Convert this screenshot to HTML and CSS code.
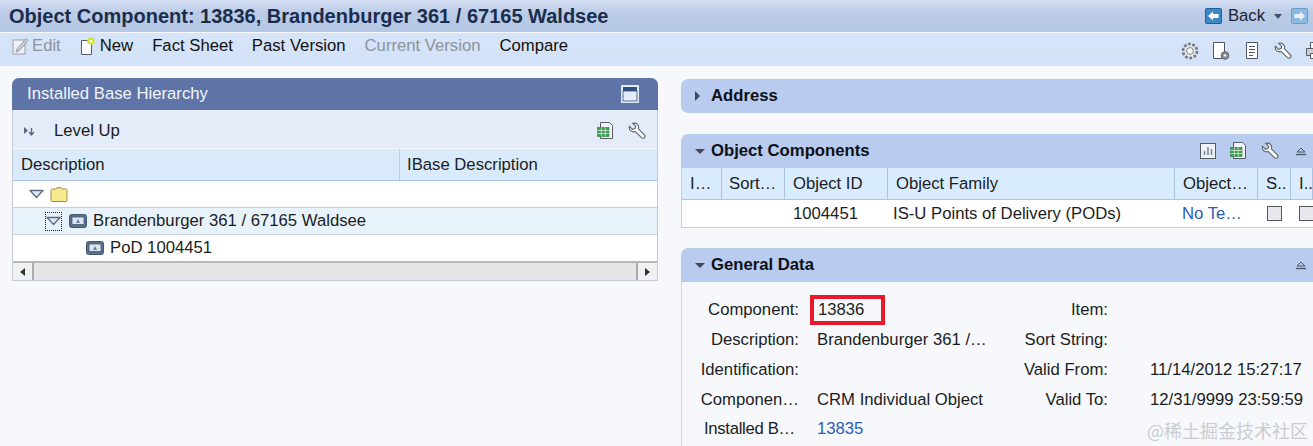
FILE: index.html
```html
<!DOCTYPE html>
<html lang="en">
<head>
<meta charset="utf-8">
<title>Object Component</title>
<link rel="stylesheet" href="styles.css">
</head>
<body>
<header class="titlebar">
  <h1 class="title">Object Component: 13836, Brandenburger 361 / 67165 Waldsee</h1>
  <div class="nav">
    <svg class="nav-ico" viewBox="0 0 17 16"><rect x=".5" y=".5" width="16" height="15" rx="1" fill="#3b88c8" stroke="#1f5f99"/><path d="M3 8 8 3.500V6h5.500v4H8v2.500z" fill="#fff"/></svg>
    <span class="nav-back">Back</span>
    <svg class="nav-caret" viewBox="0 0 8 5"><path d="M0 0h8L4 5z" fill="#40506c"/></svg>
    <svg class="nav-ico" viewBox="0 0 17 16"><rect x=".5" y=".5" width="16" height="15" rx="1" fill="#8db8e2" stroke="#6f9dcb"/><path d="M14 8 9 3.500V6H3.500v4H9v2.500z" fill="#e8f2fb"/></svg>
  </div>
</header>
<nav class="toolbar">
  <div class="tools">
    <span class="tool tool-off"><svg class="ico-edit" viewBox="0 0 17 18"><rect x="1" y="3" width="12" height="14" fill="#eef1f5" stroke="#9aa0a8"/><path d="M5 12 14 1.500l2 2-9 10.500-3 1z" fill="#c8ccd2" stroke="#8d9299" stroke-width=".8"/></svg>Edit</span>
    <span class="tool"><svg class="ico-new" viewBox="0 0 16 18"><path d="M1.500 3.500h10v14h-10z" fill="#fff" stroke="#555c66"/><circle cx="11" cy="4" r="3.800" fill="#cfe23a"/><circle cx="11" cy="4" r="1.600" fill="#f8fbd0"/></svg>New</span>
    <span class="tool">Fact Sheet</span>
    <span class="tool">Past Version</span>
    <span class="tool tool-off">Current Version</span>
    <span class="tool">Compare</span>
  </div>
  <div class="tool-icons">
    <svg class="ico18" viewBox="0 0 18 18"><circle cx="9" cy="9" r="7" fill="#e2e6ea" stroke="#70767e" stroke-width="2.600" stroke-dasharray="2.700 1.700"/><circle cx="9" cy="9" r="3.400" fill="#f4f6f8" stroke="#7d838b"/></svg>
    <svg class="ico18" viewBox="0 0 18 18"><path d="M1.500 .5h11v16h-11z" fill="#fff" stroke="#4e555f"/><circle cx="13" cy="13.500" r="3.800" fill="#8b929b" stroke="#555c66"/><circle cx="13" cy="13.500" r="1.100" fill="#fff"/></svg>
    <svg class="ico18" viewBox="0 0 18 18"><path d="M3.500 .5h11v16h-11z" fill="#fff" stroke="#4e555f"/><path d="M6 4.500h6M6 7.500h6M6 10.500h6M6 13.500h4" stroke="#4e555f" fill="none"/></svg>
    <svg class="ico18" viewBox="0 0 18 18"><use href="#wrench"/></svg>
    <svg class="ico18" viewBox="0 0 18 18"><path d="M5.500 .5h7v6h-7z" fill="#fff" stroke="#555c66"/><path d="M1.500 6.500h15v7h-15z" fill="#c9ced5" stroke="#555c66"/><path d="M5.500 11.500h7v5h-7z" fill="#fff" stroke="#555c66"/></svg>
  </div>
</nav>
<svg class="defs" width="0" height="0">
  <defs>
    <g id="wrench"><path d="M1.500 3 4.500 6l2.500-.8L7.800 3 4.800 0C8.500-.8 11.500 2 10.400 5.500l6 6c1.700 1.900-1 4.500-2.900 2.900L7.300 8.300C3.800 9.500.3 6.500 1.500 3z" transform="translate(0 1.300)" fill="#fff" stroke="#5c636c" stroke-width="1.100"/></g>
    <g id="sheet"><path d="M3.500 .5h9l3 3v13h-12z" fill="#f3f5f7" stroke="#555c66"/><rect x=".5" y="5.500" width="11.500" height="9" fill="#3f9a52" stroke="#2d7a3f" stroke-width=".6"/><path d="M.5 8.500h11.500M.5 11.500h11.500M4.300 5.500v9M8.200 5.500v9" stroke="#d6efd9" stroke-width=".8"/></g>
    <g id="chip"><rect x=".5" y=".5" width="17" height="13" rx="2" fill="#59708f" stroke="#47596f"/><rect x="3" y="3" width="12" height="7.500" fill="#dbe6f2" stroke="#3f4f66" stroke-width=".7"/><path d="M7 9l2-4 2 4z" fill="#66809f"/></g>
    <g id="tri-open"><path d="M1 1.500h13L7.500 8.500z" fill="#dfe7f2" stroke="#5d6c84" stroke-width="1.300" stroke-linejoin="round"/></g>
  </defs>
</svg>
<main class="content">
  <section class="col-left">
    <div class="ibase">
      <div class="ibase-head">
        <span>Installed Base Hierarchy</span>
        <svg class="maxim" viewBox="0 0 18 18"><rect x=".75" y=".75" width="16.500" height="16.500" fill="#fff" stroke="#dfe6f3" stroke-width="1.500"/><rect x="2" y="2" width="14" height="4" fill="#2f4f86"/><rect x="2" y="6" width="14" height="10" fill="#e4ecfa" stroke="#2f4f86" stroke-width=".8"/></svg>
      </div>
      <div class="ibase-tools">
        <span class="levelup">
          <svg class="lv-ico" viewBox="0 0 12 12"><path d="M1 2v7l4-3.500z" fill="#5c6b80"/><path d="M8.500 3v6M6 7l2.500 3L11 7" fill="none" stroke="#5c6b80" stroke-width="1.400"/></svg>
          Level Up
        </span>
        <span class="icon-group">
          <svg class="ico18" viewBox="0 0 18 18"><use href="#sheet"/></svg>
          <svg class="ico18" viewBox="0 0 18 18"><use href="#wrench"/></svg>
        </span>
      </div>
      <div class="tree-head">
        <div class="tree-th tree-th-desc">Description</div>
        <div class="tree-th">IBase Description</div>
      </div>
      <div class="tree-row">
        <svg class="tri tri-root" viewBox="0 0 15 10"><use href="#tri-open"/></svg>
        <svg class="folder" viewBox="0 0 18 15"><path d="M1 13.500V3.500c0-1 .5-1.500 1.500-1.500h3l1.500-1.300h4L12 2h3.500c1 0 1.500.5 1.500 1.500v10c0 .5-.5 1-1 1H2c-.5 0-1-.5-1-1z" fill="#f7e98e" stroke="#a58f45"/></svg>
      </div>
      <div class="tree-row tree-row-sel">
        <span class="focus"><svg class="tri" viewBox="0 0 15 10"><use href="#tri-open"/></svg></span>
        <svg class="chip" viewBox="0 0 18 14"><use href="#chip"/></svg>
        <span>Brandenburger 361 / 67165 Waldsee</span>
      </div>
      <div class="tree-row tree-row-leaf">
        <svg class="chip" viewBox="0 0 18 14"><use href="#chip"/></svg>
        <span>PoD 1004451</span>
      </div>
      <div class="scrollbar">
        <span class="sb-btn"><i class="arrow-l"></i></span>
        <span class="sb-track"></span>
        <span class="sb-btn"><i class="arrow-r"></i></span>
      </div>
    </div>
  </section>
  <section class="col-right">
    <div class="bar bar-address"><i class="arrow-r arrow-dark"></i><b>Address</b></div>
    <div class="bar bar-comp">
      <i class="arrow-d"></i><b>Object Components</b>
      <span class="bar-icons">
        <svg class="ico18" viewBox="0 0 18 18"><rect x="1.500" y="1.500" width="15" height="15" fill="#eef2f7" stroke="#555c66"/><path d="M5.500 13V9M9 13V5M12.500 13V7" stroke="#7a8490" stroke-width="1.500"/></svg>
        <svg class="ico18" viewBox="0 0 18 18"><use href="#sheet"/></svg>
        <svg class="ico18" viewBox="0 0 18 18"><use href="#wrench"/></svg>
        <svg class="collapse" viewBox="0 0 12 9"><path d="M2 5 6 1l4 4z" fill="none" stroke="#4b5563"/><path d="M1 7.500h10" stroke="#4b5563" stroke-width="1.300"/></svg>
      </span>
    </div>
    <div class="comp-table">
      <div class="comp-row comp-head">
        <div class="c c1">I…</div><div class="c c2">Sort…</div><div class="c c3">Object ID</div><div class="c c4">Object Family</div><div class="c c5">Object…</div><div class="c c6">S..</div><div class="c c7">I..</div>
      </div>
      <div class="comp-row comp-body">
        <div class="c c1"></div><div class="c c2"></div><div class="c c3">1004451</div><div class="c c4">IS-U Points of Delivery (PODs)</div><div class="c c5"><a class="link">No Te…</a></div><div class="c c6"><i class="check"></i></div><div class="c c7"><i class="check"></i></div>
      </div>
    </div>
    <div class="bar bar-general">
      <i class="arrow-d"></i><b>General Data</b>
      <span class="bar-icons">
        <svg class="collapse" viewBox="0 0 12 9"><path d="M2 5 6 1l4 4z" fill="none" stroke="#4b5563"/><path d="M1 7.500h10" stroke="#4b5563" stroke-width="1.300"/></svg>
      </span>
    </div>
    <div class="general">
      <div class="lbl">Component:</div><div class="val"><span class="mark">13836</span></div><div class="lbl2">Item:</div><div class="val2"></div>
      <div class="lbl">Description:</div><div class="val">Brandenburger 361 /…</div><div class="lbl2">Sort String:</div><div class="val2"></div>
      <div class="lbl">Identification:</div><div class="val"></div><div class="lbl2">Valid From:</div><div class="val2">11/14/2012 15:27:17</div>
      <div class="lbl">Componen…</div><div class="val">CRM Individual Object</div><div class="lbl2">Valid To:</div><div class="val2">12/31/9999 23:59:59</div>
      <div class="lbl lbl-last">Installed B…</div><div class="val val-last"><a class="link">13835</a></div><div class="lbl2"></div><div class="val2"></div>
    </div>
  </section>
</main>
<div class="watermark">@稀土掘金技术社区</div>
</body>
</html>
```

FILE: styles.css
```css
* { box-sizing: border-box; }
html, body { height: 100%; }
body {
  margin: 0;
  height: 446px;
  overflow: hidden;
  position: relative;
  background: #f6f8fb;
  color: #1b1d22;
  font: 16.7px/20px "Liberation Sans", Arial, sans-serif;
}
.defs { position: absolute; }
svg { display: block; flex: none; }

.titlebar {
  height: 32px;
  display: flex;
  align-items: center;
  justify-content: space-between;
  padding: 0 5px 0 9px;
  background: linear-gradient(#d3def3 0, #bccce6 40%, #b3c6e4 100%);
}
.title { margin: 0; font-size: 20px; font-weight: 700; color: #1b2d4d; }
.nav { display: flex; align-items: center; }
.nav-ico { width: 17px; height: 16px; }
.nav-back { margin: 0 9px 0 6px; color: #1c2330; }
.nav-caret { width: 8px; height: 5px; margin-right: 9px; }

.toolbar {
  height: 33px;
  margin-top: 1px;
  display: flex;
  justify-content: space-between;
  align-items: center;
  padding: 0 0 0 12px;
  background: linear-gradient(#d6e4f8, #d2e2f9);
}
.tools { display: flex; align-items: center; gap: 19px; margin-bottom: 8px; }
.tool { display: flex; align-items: center; color: #111; white-space: nowrap; }
.tool-off { color: #8e939b; }
.ico-edit { width: 17px; height: 18px; margin-right: 3px; }
.ico-new { width: 16px; height: 18px; margin-right: 4px; }
.ico18 { width: 18px; height: 18px; }
.tool-icons { display: flex; gap: 13px; align-items: center; margin-top: 2px; margin-right: -10px; }

.content {
  display: grid;
  grid-template-columns: 646px 632px;
  column-gap: 23px;
  padding: 12px 0 0 12px;
}
.ibase {
  border: 1px solid #c4cad3;
  border-top: 0;
  border-radius: 7px 7px 0 0;
  background: #fff;
}
.ibase-head {
  height: 32px;
  margin: 0 -1px;
  padding: 0 19px 0 15px;
  background: #5f74a6;
  color: #f2f5fb;
  border-radius: 7px 7px 0 0;
  display: flex;
  align-items: center;
  justify-content: space-between;
}
.maxim { width: 18px; height: 18px; }
.ibase-tools {
  height: 39px;
  background: #e4ebf9;
  display: flex;
  align-items: center;
  justify-content: space-between;
  padding: 3px 11px 0 10px;
  border-bottom: 1px solid #f4f7fc;
}
.levelup { display: flex; align-items: center; gap: 19px; }
.lv-ico { width: 12px; height: 12px; }
.icon-group { display: flex; gap: 13px; }
.tree-head {
  height: 32px;
  display: flex;
  background: #d9eafb;
  border-bottom: 1px solid #a9c3dc;
}
.tree-th { padding: 0 8px; line-height: 31px; flex: 1; }
.tree-th-desc { flex: none; width: 387px; border-right: 1px solid #b9d0e6; }
.tree-th + .tree-th { padding-left: 7px; }
.tree-row {
  height: 27px;
  display: flex;
  align-items: center;
  border-bottom: 1px solid #c7d0db;
  padding-left: 16px;
  background: #fff;
}
.tree-row-sel { background: #e8f2fb; padding-left: 32px; }
.tree-row-leaf { padding-left: 73px; border-bottom: 0; height: 26px; }
.tri { width: 15px; height: 10px; }
.tri-root { margin-right: 6px; }
.folder { width: 18px; height: 15px; }
.focus {
  width: 17px; height: 19px;
  margin-right: 7px;
  border: 1px dotted #222;
  display: flex; align-items: center; justify-content: center;
}
.chip { width: 18px; height: 14px; margin-right: 6px; }
.scrollbar {
  height: 19px;
  display: flex;
  background: #e6e6e6;
  border-top: 2px solid #b4b7bb;
}
.sb-btn {
  width: 21px;
  background: #f0f1f2;
  border-right: 2px solid #a9adb2;
  display: flex; align-items: center; justify-content: center;
}
.sb-btn:last-child { border-right: 0; border-left: 2px solid #a9adb2; }
.sb-track { flex: 1; }
.arrow-l { width: 0; height: 0; border: 4px solid transparent; border-left: 0; border-right: 5px solid #333; }
.arrow-r { width: 0; height: 0; border: 4px solid transparent; border-right: 0; border-left: 5px solid #333; }
.arrow-dark { border-left-color: #404a5c; border-top-width: 5px; border-bottom-width: 5px; }
.arrow-d { width: 0; height: 0; border: 5px solid transparent; border-bottom: 0; border-top: 5px solid #40495a; }

.col-right { display: flex; flex-direction: column; margin-top: 1px; }
.bar {
  background: #b9cbee;
  border-radius: 7px 0 0 0;
  display: flex;
  align-items: center;
  color: #0d1116;
}
.bar b { font-weight: 700; }
.bar-address { height: 34px; border-radius: 7px 0 0 7px; padding-left: 14px; gap: 11px; }
.bar-comp { height: 34px; margin-top: 21px; padding-left: 14px; gap: 6px; }
.bar-general { height: 34px; margin-top: 20px; padding-left: 14px; gap: 6px; }
.bar-icons { margin-left: auto; display: flex; align-items: center; gap: 13px; margin-right: 6px; }
.collapse { width: 12px; height: 9px; margin-left: 3px; }
.comp-table { border: 1px solid #c7d0db; border-width: 0 0 1px 1px; }
.comp-row { display: flex; }
.c { padding: 0 7px; white-space: nowrap; overflow: hidden; flex: none; }
.comp-head { height: 32px; background: #d9ecff; line-height: 32px; border-bottom: 1px solid #a9c3e0; }
.comp-head .c { border-right: 1px solid #a9c3e0; padding-left: 8px; }
.comp-head .c2 { padding-left: 7px; }
.comp-body { height: 27px; background: #fff; line-height: 27px; }
.c1 { width: 40px; }
.c2 { width: 63px; }
.c3 { width: 103px; padding-left: 8px; }
.c4 { width: 287px; padding-left: 5px; }
.c5 { width: 83px; padding-left: 7px; }
.c6 { width: 33px; padding-left: 9px; }
.c7 { flex: 1; padding-left: 8px; }
.check {
  display: block;
  width: 15px; height: 15px;
  margin-top: 6px;
  background: #e6e8ee;
  border: 1px solid #55595f;
}
.link { color: #2c5cb8; }
.general {
  height: 165px;
  border-left: 1px solid #ccd6ea;
  display: grid;
  grid-template-columns: 117px 222px 87px 1fr;
  grid-auto-rows: 30px;
  padding-top: 13px;
}
.lbl, .lbl2 { text-align: right; line-height: 30px; white-space: nowrap; }
.lbl-last { padding-right: 4px; letter-spacing: -.3px; line-height: 28px; }
.val { padding-left: 18px; line-height: 30px; white-space: nowrap; }
.val-last { line-height: 28px; }
.val2 { padding-left: 42px; line-height: 30px; white-space: nowrap; }
.mark {
  display: block;
  width: 75px; height: 30px;
  margin-left: -7px;
  padding-left: 4px;
  border: 4px solid #e8192c;
  line-height: 22px;
}
.watermark {
  position: absolute;
  right: 5px;
  bottom: 6px;
  color: #c9ccd2;
  font: 18px/20px "Noto Sans CJK SC", sans-serif;
}
```
